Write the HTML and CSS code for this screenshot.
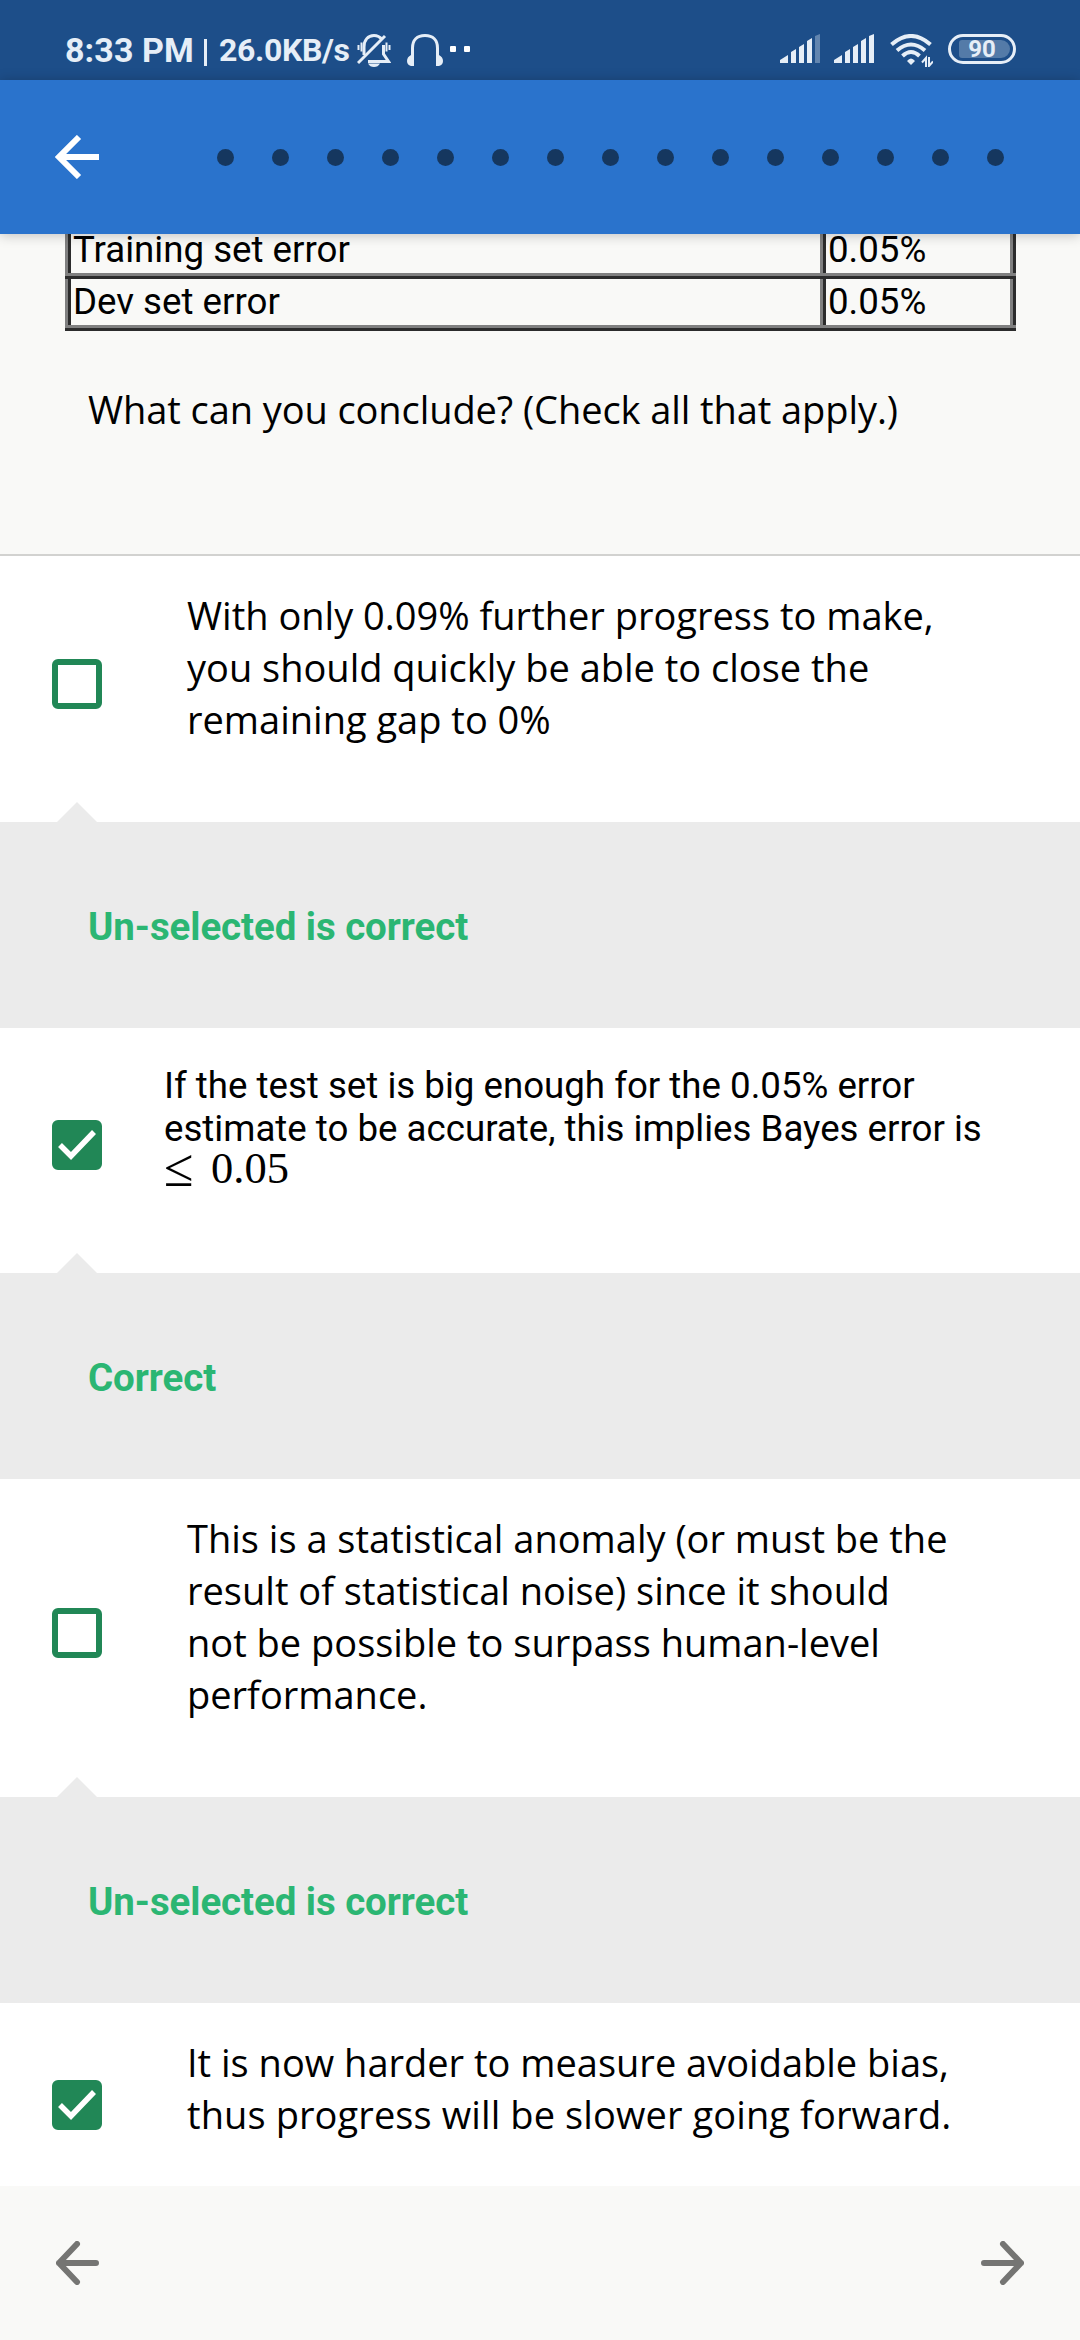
FILE: index.html
```html
<!DOCTYPE html>
<html lang="en">
<head>
<meta charset="utf-8">
<title>Quiz</title>
<link rel="stylesheet" href="styles.css">
</head>
<body>
<div class="screen">
<header class="status">
<div class="status-left">
<span class="clock">8:33 PM</span><span class="divider"></span><span class="speed">26.0KB/s</span>
<svg class="bell" width="34" height="33" viewBox="0 0 34 33"><path d="M7 21V13C7 6 11 1.500 17 1.500c4 0 6 1.500 8 4M26.500 11v9l5 7.500H11" stroke-width="3"/><path d="M1 29L28 2" stroke-width="3"/><path d="M1.500 11v5M4.500 8.500v9M29.500 8.500v9M32.500 11v5" stroke-width="2"/><path d="M11 29.500h12q-2 3.500-6 3.500t-6-3.500z" class="solid"/></svg>
<svg class="phones" width="36" height="32" viewBox="0 0 36 32"><path d="M5.500 31V14C5.500 6 10 1.500 18 1.500S30.500 6 30.500 14v17" stroke-width="3"/><path d="M7 21v11H4q-4-1-4-5t4-6zM29 21v11h3q4-1 4-5t-4-6z" class="solid"/></svg>
<span class="more"><i></i><i></i></span>
</div>
<div class="status-right">
<svg width="40" height="29" viewBox="0 0 40 29"><path d="M0 26l8-5v8H0zM11 18l5-3v14h-5zM19 13l5-3v19h-5zM27 7l5-3v25h-5z" class="solid"/><path d="M35 2l5-2v29h-5z" class="solid" opacity=".35"/></svg>
<svg width="40" height="29" viewBox="0 0 40 29"><path d="M0 26l8-5v8H0zM11 18l5-3v14h-5zM19 13l5-3v19h-5zM27 7l5-3v25h-5zM35 2l5-2v29h-5z" class="solid"/></svg>
<svg class="wifi" width="43" height="33" viewBox="0 0 43 33"><path d="M1.500 10.500Q21 -6.500 40.500 10.500M7 16.500q14-12 28 0M12.500 22q8.500-8 17 0" stroke-width="4"/><path d="M17 27q4-5 8 0l-4 4z" class="solid"/><path d="M36 33V24l-4 4.500M39 23v9l4-4.500" stroke-width="2"/></svg>
<span class="battery"><b>90</b></span>
</div>
</header>
<nav class="top">
<svg width="44" height="44" viewBox="0 0 44 44"><path d="M44 22H4M24 2L4 22l20 20" stroke-width="6"/></svg>
<div class="dots"><i></i><i></i><i></i><i></i><i></i><i></i><i></i><i></i><i></i><i></i><i></i><i></i><i></i><i></i><i></i></div>
</nav>
<main class="content">
<section class="question">
<table class="errors"><tr><td>Training set error</td><td>0.05%</td></tr><tr><td>Dev set error</td><td>0.05%</td></tr></table>
<p class="prompt">What can you conclude? (Check all that apply.)</p>
</section>
<section class="option"><span class="box"></span><p class="answer">With only 0.09% further progress to make,<br>you should quickly be able to close the<br>remaining gap to 0%</p></section>
<section class="feedback">Un-selected is correct</section>
<section class="option compact"><span class="box checked"><svg width="38" height="30" viewBox="0 0 38 30"><path d="M2 15l11 11L36 2" stroke-width="5.500"/></svg></span><p class="answer">If the test set is big enough for the 0.05% error<br>estimate to be accurate, this implies Bayes error is<br><span class="math"><span class="rel">≤</span><span>0.05</span></span></p></section>
<section class="feedback">Correct</section>
<section class="option"><span class="box"></span><p class="answer">This is a statistical anomaly (or must be the<br>result of statistical noise) since it should<br>not be possible to surpass human-level<br>performance.</p></section>
<section class="feedback">Un-selected is correct</section>
<section class="option"><span class="box checked"><svg width="38" height="30" viewBox="0 0 38 30"><path d="M2 15l11 11L36 2" stroke-width="5.500"/></svg></span><p class="answer">It is now harder to measure avoidable bias,<br><span class="wide">thus progress will be slower going forward.</span></p></section>
</main>
<footer class="bottom"><svg width="43" height="44" viewBox="0 0 43 44"><path d="M40 22H3M21 3L3 22l18 19"/></svg><svg width="43" height="44" viewBox="0 0 43 44"><path d="M3 22h37M22 3l18 19-18 19"/></svg></footer>
</div>
</body>
</html>
```
FILE: styles.css
```css
*{box-sizing:border-box}
body{margin:0;background:#fff;color:#000;font-family:Roboto,sans-serif}
svg{display:block;fill:none;stroke:currentColor;flex:none}
.solid{fill:currentColor;stroke:none}
.screen{width:1080px;height:2340px;display:flex;flex-direction:column;overflow:hidden}

.status{height:80px;flex:none;background:#1d4e89;color:#e6eef7;display:flex;justify-content:space-between;padding:34px 64px 0 65px}
.status-left,.status-right{display:flex;height:33px}
.clock,.speed{font-weight:700;white-space:nowrap;line-height:32px}
.clock{width:128px;font-size:34px;letter-spacing:.1px}
.speed{width:130px;font-size:32px;letter-spacing:-.35px}
.divider{width:3px;height:27px;margin:5px 12px 0 11px;background:currentColor}
.bell{margin-left:8px}
.phones{margin-left:16px}
.more{display:flex;gap:8px;margin:12px 0 0 7px}
.more i{width:6px;height:6px;border-radius:1px;background:#fff}
.status-right{gap:14px}
.wifi{margin-left:2px}
.battery{width:68px;height:30px;border:3px solid;border-radius:15px;padding:3px;margin-left:1px}
.battery b{display:block;height:18px;border-radius:3px 9px 9px 3px;margin-left:5px;padding-right:5px;background:#547ba8;text-align:center;font-size:24px;line-height:19px;font-weight:700}

.top{height:154px;flex:none;background:#2a73cc;color:#fff;display:flex;align-items:center;padding:0 76px 0 55px;justify-content:space-between;position:relative;z-index:1;box-shadow:0 1px 12px rgba(0,0,0,.24)}
.dots{width:787px;display:flex;justify-content:space-between}
.dots i{width:17px;height:17px;border-radius:50%;background:#15375f}

.content{flex:1;min-height:0;overflow:hidden}
.question{height:322px;background:#f9f9f7;border-bottom:2px solid #d2d2d0;display:flow-root;padding:0 64px}
.errors{width:951px;margin:-13px 0 0 1px;border-collapse:collapse;font-size:36.67px;line-height:43px}
.errors td{height:52px;padding:0 2px 2px;border:6px ridge #808080}
.errors td:first-child{width:755px}
.prompt{font:38px/52px "Open Sans",sans-serif;margin:52px 0 0 24px;white-space:nowrap;letter-spacing:-.08px}

.option{display:flex;align-items:center;padding:33px 0 77px 52px}
.answer{font:38px/52px "Open Sans",sans-serif;margin:0 0 0 85px;white-space:nowrap}
.wide{letter-spacing:.1px}
.box{width:50px;height:50px;border:6px solid #218756;border-radius:6px;flex:none;position:relative;top:17px}
.checked{background:#218756;display:flex;align-items:center;justify-content:center;color:#fff}
.compact .answer{font:36.67px/43px Roboto,sans-serif;margin-left:62px}
.compact{padding-top:36px;padding-bottom:80px}
.compact .box{top:16px}
.math{display:flex;height:43px;margin-top:-3px;margin-bottom:3px;font:44.5px/43px "Liberation Serif",serif}
.rel{width:47px;font-size:54px}
.feedback{height:206px;background:#ebebeb;color:#2bb673;font-size:38.5px;font-weight:700;line-height:209px;padding-left:88px;position:relative;letter-spacing:-.08px}
.feedback::before{content:"";position:absolute;left:57px;top:-20px;border:solid transparent;border-width:0 20px 20px;border-bottom-color:#ebebeb}

.bottom{height:154px;flex:none;background:#f9f9f7;color:#757573;display:flex;justify-content:space-between;align-items:center;padding:0 56px}
.bottom svg{stroke-width:6;stroke-linecap:round;stroke-linejoin:round}
```
